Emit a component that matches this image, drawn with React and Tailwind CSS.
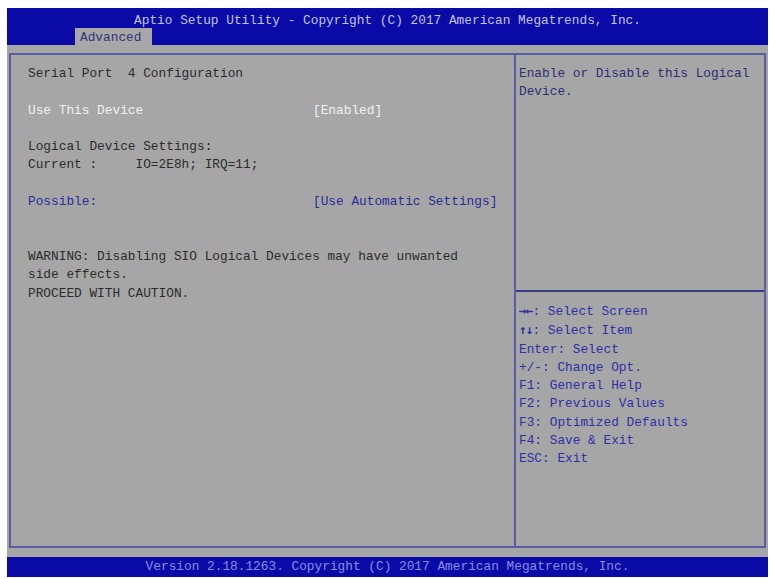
const mono = { fontFamily: '"Liberation Mono", "DejaVu Sans Mono", monospace' }

const helpKeys = [
  ["→←", ": Select Screen"],
  ["↑↓", ": Select Item"],
  ["", "Enter: Select"],
  ["", "+/-: Change Opt."],
  ["", "F1: General Help"],
  ["", "F2: Previous Values"],
  ["", "F3: Optimized Defaults"],
  ["", "F4: Save & Exit"],
  ["", "ESC: Exit"],
]

const Blank = () => <div className="h-[18.3px]" />

export default function App() {
  return (
    <div
      className="w-[770px] h-[579px] bg-white pt-[8px] pl-[7px] pr-[2px] pb-[2px] flex flex-col text-[12.8px] leading-[18.3px]"
      style={mono}
    >
      {/* header */}
      <div className="h-[37px] bg-[#0a0aa6] flex flex-col">
        <div className="h-[20px] flex items-center justify-center text-[#c4c4f4] pt-[6px]">
          Aptio Setup Utility - Copyright (C) 2017 American Megatrends, Inc.
        </div>
        <div className="flex-1 flex items-end pl-[68px]">
          <div className="h-[17px] w-[77px] bg-[#a8a8a8] text-[#34347a] pl-[5px] leading-[19px]">Advanced</div>
        </div>
      </div>

      {/* body */}
      <div className="flex-1 bg-[#a6a6a6] pt-[8px] pl-[2px] pr-[2px] pb-[9px] flex">
        <div className="flex-1 flex border-2 border-[#5c5ca4]">
          {/* left column */}
          <div className="w-[505px] border-r-2 border-[#5c5ca4] pt-[10px] pl-[17px] text-[#2c2c2c]">
            <div className="whitespace-pre">Serial Port  4 Configuration</div>
            <Blank />
            <div className="grid grid-cols-[285px_1fr] text-[#f2f2f2]">
              <span>Use This Device</span>
              <span>[Enabled]</span>
            </div>
            <Blank />
            <div>Logical Device Settings:</div>
            <div className="whitespace-pre">Current :     IO=2E8h; IRQ=11;</div>
            <Blank />
            <div className="grid grid-cols-[285px_1fr] text-[#2a2a9a]">
              <span>Possible:</span>
              <span>[Use Automatic Settings]</span>
            </div>
            <Blank />
            <Blank />
            <div>WARNING: Disabling SIO Logical Devices may have unwanted</div>
            <div>side effects.</div>
            <div>PROCEED WITH CAUTION.</div>
          </div>

          {/* right column */}
          <div className="flex-1 flex flex-col">
            <div className="h-[237px] border-b-2 border-[#3c3c80] pt-[10px] pl-[3px] text-[#2e2e74]">
              <div>Enable or Disable this Logical</div>
              <div>Device.</div>
            </div>
            <div className="pt-[10px] pl-[3px] text-[#2f2fa6]">
              {helpKeys.map(([arrow, text]) => (
                <div key={text} className="whitespace-pre">
                  {arrow && (
                    <span
                      className="font-bold tracking-[-1px]"
                      style={{ fontFamily: '"DejaVu Sans Mono", monospace' }}
                    >
                      {arrow}
                    </span>
                  )}
                  {text}
                </div>
              ))}
            </div>
          </div>
        </div>
      </div>

      {/* footer */}
      <div className="h-[20px] bg-[#0a0aa6] flex items-center justify-center text-[#8c8ce6]">
        Version 2.18.1263. Copyright (C) 2017 American Megatrends, Inc.
      </div>
    </div>
  )
}
